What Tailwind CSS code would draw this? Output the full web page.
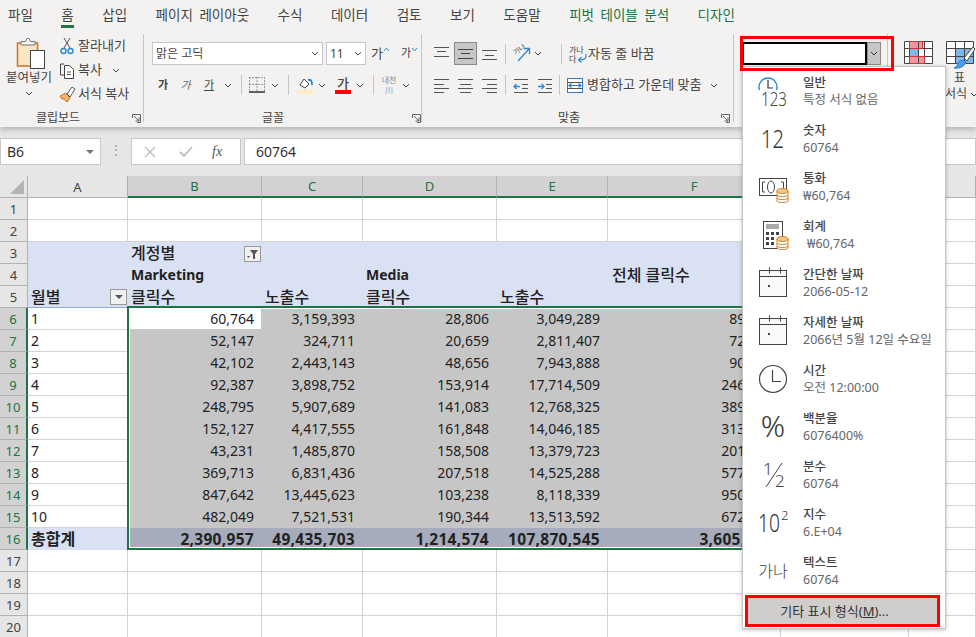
<!DOCTYPE html>
<html lang="ko">
<head>
    <meta charset="UTF-8">
    <title>Excel</title>
    <script src="https://cdn.jsdelivr.net/npm/@tailwindcss/browser@4"></script>
</head>
<body class="relative w-[976px] h-[637px] overflow-hidden bg-[#e6e6e6] text-[#444] font-['Noto_Sans','Noto_Sans_CJK_KR',sans-serif]">

    <!-- ribbon -->
    <header class="h-[127px] bg-[#f3f2f1] shadow-[0_2px_6px_rgba(0,0,0,0.25)] relative z-10">
        <nav class="flex gap-[28.5px] pl-[8px] h-[34px] text-[13.5px] leading-[30px] [word-spacing:3px]">
            <span>파일</span>
            <span class="relative">홈<span class="absolute left-0 right-0 top-[25px] h-[3px] bg-[#217346]"></span></span>
            <span>삽입</span>
            <span>페이지 레이아웃</span>
            <span>수식</span>
            <span>데이터</span>
            <span>검토</span>
            <span>보기</span>
            <span>도움말</span>
            <span class="text-[#217346]">피벗 테이블 분석</span>
            <span class="text-[#217346]">디자인</span>
        </nav>
        <div class="flex h-[88px] text-[13px]">

            <!-- clipboard -->
            <section class="relative w-[144px] border-r border-[#c6c6c6] flex">
                <div class="w-[58px] flex flex-col items-center pt-[4px]">
                    <svg width="30" height="32" viewBox="0 0 30 32" class="ml-[2px]"><rect x="2.500" y="5" width="20" height="23" fill="#fae6c0" stroke="#c8742a" stroke-width="1.500"/><path d="M6 7V3.500h4.500L12 .5h2l1.500 3H20V7z" fill="#f3f2f1" stroke="#777"/><rect x="15.500" y="12.500" width="14" height="18" fill="#fff" stroke="#444"/></svg>
                    <span class="text-[12.5px] leading-[16px] whitespace-nowrap">붙여넣기</span>
                    <svg width="8" height="5" viewBox="0 0 8 5" class="mt-[5px]"><path d="M1 1l3 3 3-3" fill="none" stroke="#444"/></svg>
                </div>
                <div class="flex flex-col ml-[1px]">
                    <div class="flex items-center h-[24px] whitespace-nowrap"><svg width="16" height="18" viewBox="0 0 16 18" class="mr-[3px]"><path d="M5 1l6 10M11 1L5 11" stroke="#555" fill="none"/><circle cx="4.500" cy="14" r="2.500" fill="none" stroke="#2b88d8" stroke-width="1.400"/><circle cx="11.500" cy="14" r="2.500" fill="none" stroke="#2b88d8" stroke-width="1.400"/></svg>잘라내기</div>
                    <div class="flex items-center h-[24px] whitespace-nowrap"><svg width="17" height="17" viewBox="0 0 17 17" class="mr-[2px]"><path d="M5 2H1.500V13H5" fill="none" stroke="#444"/><path d="M5.500 3.500h5l4 4v9h-9z" fill="#fff" stroke="#444"/><path d="M8 10h4M8 12.500h4" stroke="#555"/></svg>복사<svg width="8" height="5" viewBox="0 0 8 5" class="ml-[10px]"><path d="M1 1l3 3 3-3" fill="none" stroke="#444"/></svg></div>
                    <div class="flex items-center h-[24px] whitespace-nowrap"><svg width="17" height="17" viewBox="0 0 17 17" class="mr-[2px]"><path d="M1 10l6-3 4 5-3 4-3-3-2 0z" fill="#f2b46b" stroke="#d0701c"/><path d="M8 8l5-7 3 2-5 8z" fill="#fff" stroke="#555"/></svg>서식 복사</div>
                </div>
                <span class="absolute left-[36px] top-[75px] text-[12px]">클립보드</span>
                <svg width="9" height="9" viewBox="0 0 9 9" class="absolute left-[132px] top-[80px]"><path d="M.5 4V.5H8.500V8.500H5M2 2l5 5M7 3.500V7H3.500" fill="none" stroke="#666"/></svg>
            </section>

            <!-- font -->
            <section class="relative w-[278px] border-r border-[#c6c6c6] pl-[8px]">
                <div class="flex items-center mt-[8px] h-[23px]">
                    <div class="w-[171px] h-[23px] bg-white border border-[#c6c6c6] flex items-center justify-between pl-[3px] pr-[3px] text-[12px]">맑은 고딕<svg width="8" height="5" viewBox="0 0 8 5"><path d="M1 1l3 3 3-3" fill="none" stroke="#444"/></svg></div>
                    <div class="w-[40px] h-[23px] ml-[3px] bg-white border border-[#c6c6c6] flex items-center justify-between pl-[3px] pr-[3px] text-[12px]">11<svg width="8" height="5" viewBox="0 0 8 5"><path d="M1 1l3 3 3-3" fill="none" stroke="#444"/></svg></div>
                    <span class="ml-[5px] text-[13px]">가</span><svg width="7" height="5" viewBox="0 0 7 5" class="mb-[8px]"><path d="M1 4l2.500-3L6 4" fill="none" stroke="#2b88d8"/></svg>
                    <span class="ml-[11px] text-[11px]">가</span><svg width="7" height="5" viewBox="0 0 7 5" class="mb-[8px]"><path d="M1 1l2.500 3L6 1" fill="none" stroke="#2b88d8"/></svg>
                </div>
                <div class="flex items-center mt-[8px] h-[24px] text-[11px]">
                    <span class="w-[22px] text-center font-bold">가</span>
                    <span class="w-[23px] text-center italic text-[#666]">가</span>
                    <span class="w-[24px] text-center underline">가</span>
                    <svg width="8" height="5" viewBox="0 0 8 5" class="ml-[3px]"><path d="M1 1l3 3 3-3" fill="none" stroke="#444"/></svg>
                    <span class="ml-[9px] w-px h-[20px] bg-[#c6c6c6]"></span>
                    <svg width="16" height="16" viewBox="0 0 16 16" class="ml-[7px]"><path d="M.5.500h15M.5.500v14M15.500.500v14M8 .5v14M.5 7.500h15" fill="none" stroke="#444" stroke-dasharray="1 2"/><path d="M0 15h16" stroke="#222" stroke-width="1.400"/></svg>
                    <svg width="8" height="5" viewBox="0 0 8 5" class="ml-[6px]"><path d="M1 1l3 3 3-3" fill="none" stroke="#444"/></svg>
                    <span class="ml-[9px] w-px h-[20px] bg-[#c6c6c6]"></span>
                    <svg width="16" height="17" viewBox="0 0 16 17" class="ml-[8px]"><path d="M3 8l4-6 5 5-4 4z" fill="#fff" stroke="#444"/><path d="M11 3c3-1 4 1 4 5" fill="none" stroke="#2b88d8" stroke-width="1.800"/><rect y="13" width="16" height="4" fill="#fbeec2"/></svg>
                    <svg width="8" height="5" viewBox="0 0 8 5" class="ml-[5px]"><path d="M1 1l3 3 3-3" fill="none" stroke="#444"/></svg>
                    <span class="relative ml-[9px] w-[16px] text-center font-medium text-[13px] leading-[16px] -mt-[4px]">가<span class="absolute left-0 right-0 top-[15px] h-[4px] bg-[#ff0000]"></span></span>
                    <svg width="8" height="5" viewBox="0 0 8 5" class="ml-[5px]"><path d="M1 1l3 3 3-3" fill="none" stroke="#444"/></svg>
                    <span class="ml-[9px] w-px h-[20px] bg-[#c6c6c6]"></span>
                    <span class="ml-[7px] w-[16px] flex flex-col items-center text-[8px] leading-[10px] text-[#8a8a8a] whitespace-nowrap">내천<span class="text-[#5ba5dd]">川</span></span>
                    <svg width="8" height="5" viewBox="0 0 8 5" class="ml-[5px]"><path d="M1 1l3 3 3-3" fill="none" stroke="#444"/></svg>
                </div>
                <span class="absolute left-[118px] top-[75px] text-[12px]">글꼴</span>
                <svg width="9" height="9" viewBox="0 0 9 9" class="absolute left-[268px] top-[80px]"><path d="M.5 4V.5H8.500V8.500H5M2 2l5 5M7 3.500V7H3.500" fill="none" stroke="#666"/></svg>
            </section>

            <!-- alignment -->
            <section class="relative w-[312px] border-r border-[#c6c6c6] pl-[12px]">
                <div class="flex items-center mt-[8px] h-[23px]">
                    <svg width="15" height="14" viewBox="0 0 15 14" class="mb-[5px]"><path d="M0 3.500h15M3 7.500h9M0 12.500h15" stroke="#555"/></svg>
                    <span class="ml-[5px] w-[23px] h-[23px] bg-[#c6c6c6] border border-[#8a8a8a] flex items-center justify-center"><svg width="15" height="14" viewBox="0 0 15 14"><path d="M0 2.500h15M3 6.500h9M0 11.500h15" stroke="#444"/></svg></span>
                    <svg width="15" height="14" viewBox="0 0 15 14" class="ml-[5px] mt-[5px]"><path d="M0 1.500h15M3 6.500h9M0 10.500h15" stroke="#555"/></svg>
                    <span class="ml-[8px] w-px h-[20px] bg-[#c6c6c6]"></span>
                    <span class="relative ml-[7px] w-[18px] h-[18px]"><span class="absolute left-0 top-0 text-[7px] leading-[9px] rotate-[-35deg] whitespace-nowrap">가나</span><svg width="18" height="18" viewBox="0 0 18 18" class="absolute left-0 top-0"><path d="M5 16L16 4M11 3.500h5.500V9" fill="none" stroke="#2b88d8" stroke-width="1.300"/></svg></span>
                    <svg width="8" height="5" viewBox="0 0 8 5" class="ml-[3px]"><path d="M1 1l3 3 3-3" fill="none" stroke="#444"/></svg>
                    <span class="ml-[19px] w-px h-[20px] bg-[#c6c6c6]"></span>
                    <span class="relative ml-[7px] w-[17px] h-[18px] mr-[2px] text-[8px] leading-[9px] whitespace-nowrap">가나<br>다<svg width="12" height="9" viewBox="0 0 12 9" class="absolute left-[7px] top-[9px]"><path d="M10 0v2c0 3-2 4-7 4M5.500 3L2.500 6l3 2.500" fill="none" stroke="#2b88d8" stroke-width="1.200"/></svg></span>
                    <span class="text-[13px] whitespace-nowrap">자동 줄 바꿈</span>
                </div>
                <div class="flex items-center mt-[8px] h-[24px]">
                    <svg width="15" height="15" viewBox="0 0 15 15"><path d="M0 1.500h15M0 6.500h10M0 10.500h15M0 14.500h10" stroke="#555"/></svg>
                    <svg width="15" height="15" viewBox="0 0 15 15" class="ml-[9px]"><path d="M0 1.500h15M2 6.500h11M0 10.500h15M2 14.500h11" stroke="#555"/></svg>
                    <svg width="15" height="15" viewBox="0 0 15 15" class="ml-[9px]"><path d="M0 1.500h15M5 6.500h10M0 10.500h15M5 14.500h10" stroke="#555"/></svg>
                    <span class="ml-[8px] w-px h-[20px] bg-[#c6c6c6]"></span>
                    <svg width="15" height="15" viewBox="0 0 15 15" class="ml-[7px]"><path d="M1 1.500h14M9 6.500h6M9 10.500h6M1 14.500h14" stroke="#555"/><path d="M7 8.500H1M3.500 6L1 8.500 3.500 11" fill="none" stroke="#2b88d8" stroke-width="1.300"/></svg>
                    <svg width="15" height="15" viewBox="0 0 15 15" class="ml-[9px]"><path d="M1 1.500h14M9 6.500h6M9 10.500h6M1 14.500h14" stroke="#555"/><path d="M1 8.500h6M4.500 6L7 8.500 4.500 11" fill="none" stroke="#2b88d8" stroke-width="1.300"/></svg>
                    <span class="ml-[7px] w-px h-[20px] bg-[#c6c6c6]"></span>
                    <svg width="16" height="15" viewBox="0 0 16 15" class="ml-[7px] mr-[4px]"><rect x=".5" y=".5" width="15" height="14" fill="#fff" stroke="#2b7cd3"/><path d="M.5 4.500h15M.5 10.500h15" stroke="#555"/><path d="M2 7.500h12M4.500 5.500l-2.500 2 2.500 2M11.500 5.500l2.500 2-2.500 2" fill="none" stroke="#2b7cd3" stroke-width="1.200"/></svg>
                    <span class="text-[13px] whitespace-nowrap">병합하고 가운데 맞춤</span>
                    <svg width="8" height="5" viewBox="0 0 8 5" class="ml-[9px]"><path d="M1 1l3 3 3-3" fill="none" stroke="#444"/></svg>
                </div>
                <span class="absolute left-[136px] top-[75px] text-[12px]">맞춤</span>
                <svg width="9" height="9" viewBox="0 0 9 9" class="absolute left-[299px] top-[80px]"><path d="M.5 4V.5H8.500V8.500H5M2 2l5 5M7 3.500V7H3.500" fill="none" stroke="#666"/></svg>
            </section>

            <!-- number format -->
            <section class="relative w-[154px] border-r border-[#c6c6c6] pl-[8px]">
                <div class="flex mt-[8px] h-[23px] w-[139px]">
                    <div class="flex-1 bg-white border-2 border-black"></div>
                    <div class="w-[14px] bg-[#c6c6c6] border border-[#8a8a8a] flex items-center justify-center"><svg width="8" height="5" viewBox="0 0 8 5"><path d="M1 1l3 3 3-3" fill="none" stroke="#333"/></svg></div>
                </div>
            </section>

            <!-- styles -->
            <section class="relative flex-1 pl-[16px]">
                <div class="flex gap-[13px] mt-[7px]">
                    <svg width="29" height="23" viewBox="0 0 29 23" class="shrink-0"><rect x=".5" y=".5" width="28" height="22" fill="#fff"/><rect x="5" y="0" width="13" height="7" fill="#f4949c"/><rect x="5" y="7" width="9" height="8" fill="#7db8ea"/><rect x="5" y="15" width="15" height="8" fill="#f4949c"/><path d="M.5.5h28v22H.5zM5.500 .5v22M14.500 .5v22M20.500 .5v22M.5 7.500h28M.5 15.500h28" stroke="#444" fill="none"/><path d="M5.500 .5h13v7h-13zM5.500 15.500h15v7h-15z" fill="none" stroke="#d13438"/></svg>
                    <svg width="30" height="30" viewBox="0 0 30 30" class="shrink-0"><rect x=".5" y=".5" width="27" height="22" fill="#fff"/><rect x="9" y="7" width="19" height="16" fill="#7db8ea"/><path d="M.5.5h27v22H.5zM9.500 .5v22M18.500 .5v22M.5 7.500h27M.5 15.500h27" stroke="#444" fill="none"/><path d="M18 17L27 6l2 2-8 12z" fill="#fff" stroke="#444"/><path d="M8 27c3 0 3-5 6-7 2-1 4-1 6 1-1 4-6 7-12 6z" fill="#4a9ce0" stroke="#2b7cd3"/></svg>
                </div>
                <span class="absolute left-[66px] top-[35px] text-[12px]">표</span>
                <span class="absolute left-[57px] top-[51px] text-[12px] whitespace-nowrap flex items-center">서식<svg width="8" height="5" viewBox="0 0 8 5" class="ml-[3px]"><path d="M1 1l3 3 3-3" fill="none" stroke="#444"/></svg></span>
            </section>
        </div>
    </header>

    <!-- formula bar -->
    <div class="flex items-start h-[38px] pt-[11px] text-[14px] text-[#333] relative">
        <div class="w-[101px] h-[27px] bg-white border border-[#c8c8c8] flex items-center justify-between pl-[6px] pr-[6px]">B6<span class="w-0 h-0 border-x-[4px] border-x-transparent border-t-[4px] border-t-[#777]"></span></div>
        <span class="w-[30px] text-center text-[#999] leading-[24px] text-[12px]">⋮</span>
        <div class="w-[110px] h-[27px] bg-white border border-[#c8c8c8] flex items-center">
            <svg width="12" height="12" viewBox="0 0 12 12" class="ml-[12px]"><path d="M1 1l10 10M11 1L1 11" stroke="#bbb" stroke-width="1.300"/></svg>
            <svg width="14" height="12" viewBox="0 0 14 12" class="ml-[23px]"><path d="M1 6l4 4 8-9" fill="none" stroke="#bbb" stroke-width="1.800"/></svg>
            <span class="ml-[19px] font-['Liberation_Serif'] italic text-[#555] text-[14px]">fx</span>
        </div>
        <div class="ml-[3px] flex-1 h-[27px] bg-white border border-[#c8c8c8] flex items-center pl-[11px]">60764</div>
    </div>

    <!-- worksheet -->
    <div class="h-[11px]"></div>
    <table class="w-[976px] table-fixed border-separate border-spacing-0 bg-white text-[14px] leading-[20px] text-[#222] [&_td]:h-[22px] [&_td]:p-0 [&_td]:px-[3px] [&_td]:border-r [&_td]:border-b [&_td]:border-[#d4d4d4] [&_td]:overflow-hidden [&_td]:whitespace-nowrap [&_th]:h-[22px] [&_th]:p-0 [&_th]:font-normal [&_th]:text-[13px] [&_th]:text-[#444] [&_th]:bg-[#e6e6e6] [&_th]:border-r [&_th]:border-b [&_th]:border-[#b1b1b1]">
        <colgroup><col class="w-[28px]"><col class="w-[100px]"><col class="w-[134px]"><col class="w-[101px]"><col class="w-[134px]"><col class="w-[111px]"><col class="w-[173px]"><col class="w-[128px]"><col></colgroup>
        <thead>
            <tr class="[&>th:nth-child(n+3):nth-child(-n+7)]:bg-[#d2d2d2]! [&>th:nth-child(n+3):nth-child(-n+7)]:text-[#217346]! [&>th:nth-child(n+3):nth-child(-n+7)]:border-b-2! [&>th:nth-child(n+3):nth-child(-n+7)]:border-b-[#217346]!">
                <th class="relative"><span class="absolute left-[10px] top-[4px] w-0 h-0 border-l-[14px] border-l-transparent border-b-[14px] border-b-[#b4b4b4]"></span></th>
                <th>A</th><th>B</th><th>C</th><th>D</th><th>E</th><th>F</th><th></th><th></th>
            </tr>
        </thead>
        <tbody>
            <tr><th class="pr-[6px]">1</th><td></td><td></td><td></td><td></td><td></td><td></td><td></td><td></td></tr>
            <tr><th class="pr-[6px]">2</th><td></td><td></td><td></td><td></td><td></td><td></td><td></td><td></td></tr>
            <tr class="text-[16px] font-medium [&>td:nth-child(-n+7)]:bg-[#d9e1f2]! [&>td:nth-child(-n+7)]:border-[#d9e1f2]!">
                <th class="pr-[6px]">3</th><td></td><td class="relative">계정별<span class="absolute left-[116px] top-[4px] w-[17px] h-[16px] bg-[#f0f0f0] border border-[#9a9a9a] flex items-center justify-center"><svg width="11" height="9" viewBox="0 0 11 9"><path d="M3 0h8L8 4v5H6V4zM0 6h3L1.500 8z" fill="#555"/></svg></span></td><td></td><td></td><td></td><td></td><td></td><td></td>
            </tr>
            <tr class="text-[16px] font-medium [&>td:nth-child(-n+7)]:bg-[#d9e1f2]! [&>td:nth-child(-n+7)]:border-[#d9e1f2]!">
                <th class="pr-[6px]">4</th><td></td><td class="font-bold text-[14px]">Marketing</td><td></td><td class="font-bold text-[14px]">Media</td><td></td><td class="pl-[4px]!">전체 클릭수</td><td></td><td></td>
            </tr>
            <tr class="text-[16px] font-medium [&>td:nth-child(-n+7)]:bg-[#d9e1f2]! [&>td:nth-child(-n+7)]:border-[#d9e1f2]! [&>td:nth-child(2)]:border-b-[#8ea9db]!">
                <th class="pr-[6px]">5</th><td class="relative">월별<span class="absolute left-[82px] top-[3px] w-[17px] h-[16px] bg-[#f0f0f0] border border-[#9a9a9a] flex items-center justify-center"><span class="w-0 h-0 border-x-[4px] border-x-transparent border-t-[4px] border-t-[#555]"></span></span></td><td>클릭수</td><td>노출수</td><td>클릭수</td><td>노출수</td><td></td><td></td><td></td>
            </tr>
        </tbody>
        <tbody class="[&_th]:bg-[#d2d2d2]! [&_th]:text-[#217346]! [&_th]:border-r-2! [&_th]:border-r-[#217346]! [&_td:nth-child(n+3):nth-child(-n+7)]:bg-[#c6c6c6] [&_td:nth-child(n+3):nth-child(-n+7)]:border-[#c6c6c6]! [&_td:nth-child(n+3):nth-child(-n+7)]:text-right [&_td:nth-child(n+3):nth-child(-n+7)]:pr-[7px]! [&_td:nth-child(2)]:border-r-0!">
            <tr><th class="pr-[6px]">6</th><td>1</td><td class="bg-white! border-white!">60,764</td><td>3,159,393</td><td>28,806</td><td>3,049,289</td><td>89,570</td><td></td><td></td></tr>
            <tr><th class="pr-[6px]">7</th><td>2</td><td>52,147</td><td>324,711</td><td>20,659</td><td>2,811,407</td><td>72,806</td><td></td><td></td></tr>
            <tr><th class="pr-[6px]">8</th><td>3</td><td>42,102</td><td>2,443,143</td><td>48,656</td><td>7,943,888</td><td>90,758</td><td></td><td></td></tr>
            <tr><th class="pr-[6px]">9</th><td>4</td><td>92,387</td><td>3,898,752</td><td>153,914</td><td>17,714,509</td><td>246,301</td><td></td><td></td></tr>
            <tr><th class="pr-[6px]">10</th><td>5</td><td>248,795</td><td>5,907,689</td><td>141,083</td><td>12,768,325</td><td>389,878</td><td></td><td></td></tr>
            <tr><th class="pr-[6px]">11</th><td>6</td><td>152,127</td><td>4,417,555</td><td>161,848</td><td>14,046,185</td><td>313,975</td><td></td><td></td></tr>
            <tr><th class="pr-[6px]">12</th><td>7</td><td>43,231</td><td>1,485,870</td><td>158,508</td><td>13,379,723</td><td>201,739</td><td></td><td></td></tr>
            <tr><th class="pr-[6px]">13</th><td>8</td><td>369,713</td><td>6,831,436</td><td>207,518</td><td>14,525,288</td><td>577,231</td><td></td><td></td></tr>
            <tr><th class="pr-[6px]">14</th><td>9</td><td>847,642</td><td>13,445,623</td><td>103,238</td><td>8,118,339</td><td>950,880</td><td></td><td></td></tr>
            <tr><th class="pr-[6px]">15</th><td>10</td><td>482,049</td><td>7,521,531</td><td>190,344</td><td>13,513,592</td><td>672,393</td><td></td><td></td></tr>
            <tr class="font-bold text-[15.5px] tracking-[.3px] [&>td:nth-child(2)]:bg-[#d9e1f2] [&>td:nth-child(2)]:border-[#d9e1f2]! [&>td:nth-child(n+3):nth-child(-n+7)]:bg-[#a6acbb]! [&>td:nth-child(n+3):nth-child(-n+7)]:border-[#a6acbb]! [&>td:nth-child(-n+7)]:border-t! [&>td:nth-child(-n+7)]:border-t-[#8ea9db]!">
                <th class="pr-[6px] tracking-normal">16</th><td class="text-[16px] tracking-normal">총합계</td><td>2,390,957</td><td>49,435,703</td><td>1,214,574</td><td>107,870,545</td><td>3,605,531</td><td></td><td></td>
            </tr>
        </tbody>
        <tbody>
            <tr><th class="pr-[6px]">17</th><td></td><td></td><td></td><td></td><td></td><td></td><td></td><td></td></tr>
            <tr><th class="pr-[6px]">18</th><td></td><td></td><td></td><td></td><td></td><td></td><td></td><td></td></tr>
            <tr><th class="pr-[6px]">19</th><td></td><td></td><td></td><td></td><td></td><td></td><td></td><td></td></tr>
            <tr><th class="pr-[6px]">20</th><td></td><td></td><td></td><td></td><td></td><td></td><td></td><td></td></tr>
        </tbody>
    </table>

    <!-- selection box -->
    <div class="absolute left-[127px] top-[306px] w-[660px] h-[244px] border-2 border-[#217346] shadow-[inset_0_0_0_1px_#fff] z-10"></div>

    <!-- red highlight on number format box -->
    <div class="absolute left-[740px] top-[36px] w-[154px] h-[35px] border-[3px] border-[#ff0000] z-30"></div>

    <!-- number format dropdown -->
    <div class="absolute left-[742px] top-[66px] w-[204px] h-[563px] bg-white border border-[#c6c6c6] shadow-[0_1px_4px_rgba(0,0,0,0.25)] z-20 text-[12.5px] leading-[17px]">
        <div class="flex items-center h-[48px]">
            <div class="w-[60px] flex justify-center shrink-0"><svg width="34" height="34" viewBox="0 0 34 34"><path d="M3.500 16a9 9 0 1 1 17 0" fill="none" stroke="#2b88d8" stroke-width="1.400"/><path d="M12 6v8h5" fill="none" stroke="#333" stroke-width="1.200"/><text x="5" y="32" font-size="20" font-weight="300" fill="#444" textLength="26" lengthAdjust="spacingAndGlyphs">123</text></svg></div>
            <div><p class="font-medium">일반</p><p class="text-[#666]">특정 서식 없음</p></div>
        </div>
        <div class="flex items-center h-[48px]">
            <div class="w-[60px] flex justify-center shrink-0"><svg width="34" height="34" viewBox="0 0 34 34"><text x="5" y="26" font-size="25" font-weight="300" fill="#333" textLength="23" lengthAdjust="spacingAndGlyphs">12</text></svg></div>
            <div><p class="font-medium">숫자</p><p class="text-[#666]">60764</p></div>
        </div>
        <div class="flex items-center h-[48px]">
            <div class="w-[60px] flex justify-center shrink-0"><svg width="34" height="34" viewBox="0 0 34 34"><rect x="3.500" y="8.500" width="27" height="17" fill="#fff" stroke="#444"/><path d="M9 12H6.500v10H9M25 12h2.500v10H25" fill="none" stroke="#444"/><ellipse cx="15" cy="17" rx="3.500" ry="6" fill="none" stroke="#444"/><path d="M21 21c0-2 11-2 11 0v10c0 2-11 2-11 0z" fill="#fff" stroke="#e07b14"/><ellipse cx="26.500" cy="21" rx="5.500" ry="2.500" fill="#f6c784" stroke="#e07b14"/><path d="M21 25c0 2 11 2 11 0M21 28c0 2 11 2 11 0" fill="none" stroke="#e07b14"/></svg></div>
            <div><p class="font-medium">통화</p><p class="text-[#666]">₩60,764</p></div>
        </div>
        <div class="flex items-center h-[48px]">
            <div class="w-[60px] flex justify-center shrink-0"><svg width="34" height="34" viewBox="0 0 34 34"><rect x="7.500" y="3.500" width="19" height="27" fill="#fff" stroke="#444"/><rect x="10" y="6" width="13" height="5" fill="#aaa"/><path d="M10 14h3v3h-3zM15 14h3v3h-3zM20 14h3v3h-3zM10 19h3v3h-3zM15 19h3v3h-3zM10 24h3v3h-3zM15 24h3v3h-3z" fill="#444"/><path d="M21 21c0-2 11-2 11 0v9c0 2-11 2-11 0z" fill="#fff" stroke="#e07b14"/><ellipse cx="26.500" cy="21" rx="5.500" ry="2.500" fill="#f6c784" stroke="#e07b14"/><path d="M21 25c0 2 11 2 11 0M21 28c0 2 11 2 11 0" fill="none" stroke="#e07b14"/></svg></div>
            <div><p class="font-medium">회계</p><p class="text-[#666] pl-[4px]">₩60,764</p></div>
        </div>
        <div class="flex items-center h-[48px]">
            <div class="w-[60px] flex justify-center shrink-0"><svg width="34" height="34" viewBox="0 0 34 34"><rect x="3.500" y="4.500" width="27" height="26" fill="#f9f9f9" stroke="#444"/><path d="M3.500 10.500h27M13.500 1.500v6M24.500 1.500v6" fill="none" stroke="#444"/><rect x="12" y="19" width="2" height="2" fill="#444"/></svg></div>
            <div><p class="font-medium">간단한 날짜</p><p class="text-[#666]">2066-05-12</p></div>
        </div>
        <div class="flex items-center h-[48px]">
            <div class="w-[60px] flex justify-center shrink-0"><svg width="34" height="34" viewBox="0 0 34 34"><rect x="3.500" y="4.500" width="27" height="26" fill="#f9f9f9" stroke="#444"/><path d="M3.500 10.500h27M13.500 1.500v6M24.500 1.500v6" fill="none" stroke="#444"/><rect x="12" y="19" width="2" height="2" fill="#444"/></svg></div>
            <div><p class="font-medium">자세한 날짜</p><p class="text-[#666] whitespace-nowrap">2066년 5월 12일 수요일</p></div>
        </div>
        <div class="flex items-center h-[48px]">
            <div class="w-[60px] flex justify-center shrink-0"><svg width="34" height="34" viewBox="0 0 34 34"><circle cx="17" cy="17" r="13.500" fill="none" stroke="#444" stroke-width="1.200"/><path d="M16.500 8v11.500H25" fill="none" stroke="#444" stroke-width="1.200"/></svg></div>
            <div><p class="font-medium">시간</p><p class="text-[#666]">오전 12:00:00</p></div>
        </div>
        <div class="flex items-center h-[48px]">
            <div class="w-[60px] flex justify-center shrink-0 text-[30px] font-light text-[#333] -mt-[3px]">%</div>
            <div><p class="font-medium">백분율</p><p class="text-[#666]">6076400%</p></div>
        </div>
        <div class="flex items-center h-[48px]">
            <div class="w-[60px] flex justify-center shrink-0"><svg width="34" height="34" viewBox="0 0 34 34"><text x="7" y="17" font-size="17" font-weight="300" fill="#444">1</text><path d="M10 29L26 5" stroke="#444"/><text x="19" y="29" font-size="17" font-weight="300" fill="#444">2</text></svg></div>
            <div><p class="font-medium">분수</p><p class="text-[#666]">60764</p></div>
        </div>
        <div class="flex items-center h-[48px]">
            <div class="w-[60px] flex justify-center shrink-0"><svg width="34" height="34" viewBox="0 0 34 34"><text x="2" y="26" font-size="26" font-weight="300" fill="#333" textLength="22" lengthAdjust="spacingAndGlyphs">10</text><text x="25" y="14" font-size="13" font-weight="300" fill="#333">2</text></svg></div>
            <div><p class="font-medium">지수</p><p class="text-[#666]">6.E+04</p></div>
        </div>
        <div class="flex items-center h-[48px]">
            <div class="w-[60px] flex justify-center shrink-0 text-[16px] text-[#444] font-light">가나</div>
            <div><p class="font-medium">텍스트</p><p class="text-[#666]">60764</p></div>
        </div>
        <div class="absolute left-[3px] right-[3px] top-[526px] border-t border-[#d4d4d4]"></div>
        <div class="ml-[2px] w-[195px] h-[32px] bg-[#d0cecc] border-[3px] border-[#ff0000] flex items-center justify-center pr-[16px] text-[13px] text-[#333] whitespace-nowrap">기타 표시 형식(<span class="underline">M</span>)...</div>
    </div>
</body>
</html>
